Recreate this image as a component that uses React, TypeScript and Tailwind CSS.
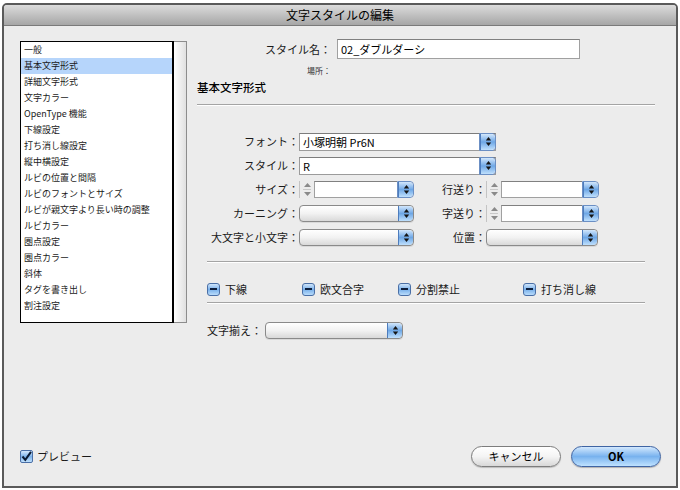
import React from 'react';

const items = [
  '一般',
  '基本文字形式',
  '詳細文字形式',
  '文字カラー',
  'OpenType 機能',
  '下線設定',
  '打ち消し線設定',
  '縦中横設定',
  'ルビの位置と間隔',
  'ルビのフォントとサイズ',
  'ルビが親文字より長い時の調整',
  'ルビカラー',
  '圏点設定',
  '圏点カラー',
  '斜体',
  'タグを書き出し',
  '割注設定',
];

const UpDown = () => (
  <svg width="7" height="11" viewBox="0 0 7 11">
    <path d="M3.5 1 L6.2 4.4 H0.8 Z M3.5 10 L6.2 6.6 H0.8 Z" fill="#151515" />
  </svg>
);

// blue aqua arrow button on the right end of popups
const BlueBtn = () => (
  <div className="w-[15px] h-full shrink-0 rounded-r-[4px] border-l border-[#4d7cbd] bg-linear-to-b from-[#d2e7fc] via-[#6ea7e5] to-[#bfe0fd] flex items-center justify-center">
    <UpDown />
  </div>
);

const Popup = ({ className }: { className: string }) => (
  <div
    className={`${className} h-[17px] flex rounded-[4px] border border-[#8a8a8a] bg-linear-to-b from-white via-[#f2f2f2] to-[#d9d9d9] overflow-hidden shadow-[0_1px_0_rgba(0,0,0,0.08)]`}
  >
    <div className="flex-1" />
    <BlueBtn />
  </div>
);

const Combo = ({ value }: { value: string }) => (
  <div className="w-[197px] h-[18px] flex bg-white border border-[#9b9b9b] border-t-[#7c7c7c]">
    <div className="flex-1 px-[3px] text-[11px] leading-[16px] text-black">{value}</div>
    <div className="-my-px -mr-px rounded-r-[4px] border border-[#6b8fc4] overflow-hidden flex">
      <BlueBtn />
    </div>
  </div>
);

const Stepper = ({ field }: { field: string }) => (
  <div className="flex h-[17px]">
    <div className="w-[15px] h-full flex flex-col items-center justify-center gap-[2px] border-l border-[#c4c4c4]">
      <svg width="7" height="4" viewBox="0 0 7 4">
        <path d="M3.5 0 L7 4 H0 Z" fill="#8a8a8a" />
      </svg>
      <div className="w-[8px] h-px bg-[#c8c8c8]" />
      <svg width="7" height="4" viewBox="0 0 7 4">
        <path d="M3.5 4 L7 0 H0 Z" fill="#8a8a8a" />
      </svg>
    </div>
    <div className={`${field} h-full bg-white border border-[#a0a0a0] border-t-[#808080] border-r-0`} />
    <div className="h-full rounded-r-[4px] border border-[#6b8fc4] overflow-hidden flex">
      <BlueBtn />
    </div>
  </div>
);

const Mixed = () => (
  <div className="w-[13px] h-[13px] rounded-[3px] border border-[#4a6fa6] bg-linear-to-b from-[#cfe5fb] via-[#79b0ea] to-[#b9dcfb] flex items-center justify-center">
    <div className="w-[7px] h-[2px] bg-[#0d1f3d]" />
  </div>
);

const Sep = ({ className }: { className: string }) => (
  <div className={`${className} h-[2px] border-t border-[#a4a4a4] border-b border-b-white`} />
);

export default function App() {
  return (
    <div className="w-[680px] h-[490px] bg-white pt-[3px] px-[2px] pb-[2px] font-['Noto_Sans_CJK_JP','Noto_Sans',sans-serif] text-[#1a1a1a]">
      <div className="w-full h-full flex flex-col border-2 border-[#5a5a5a] rounded-t-[5px] overflow-hidden bg-[#ececec]">
        {/* title bar */}
        <div className="h-[21px] shrink-0 bg-linear-to-b from-[#dcdcdc] to-[#a6a6a6] border-b border-[#7a7a7a] flex items-center justify-center text-[12px] text-black">
          文字スタイルの編集
        </div>

        <div className="flex-1 flex flex-col">
          <div className="flex pt-[13px] pl-[16px] pr-[21px]">
            {/* category list */}
            <div className="mt-[2px] w-[167px] h-[282px] flex shrink-0">
              <div className="flex-1 bg-white border border-black border-r-2">
                {items.map((it, i) => (
                  <div
                    key={it}
                    className={`h-[16px] pl-[3px] text-[9px] leading-[16px] whitespace-nowrap ${
                      i === 1 ? 'bg-[#b6d5fb]' : ''
                    }`}
                  >
                    {it}
                  </div>
                ))}
              </div>
              <div className="w-[13px] bg-linear-to-r from-white to-[#e0e0e0] border-y border-r border-[#8c8c8c]" />
            </div>

            {/* form */}
            <div className="ml-[10px] flex-1 flex flex-col">
              <div className="flex items-center h-[20px]">
                <div className="w-[136px] text-right text-[11px] pr-[2px]">スタイル名：</div>
                <div className="ml-[4px] w-[243px] h-[20px] bg-white border border-[#a0a0a0] border-t-[#808080] px-[3px] text-[11px] leading-[18px] text-black">
                  02_ダブルダーシ
                </div>
              </div>
              <div className="mt-[6px] w-[136px] text-right text-[8px] leading-[12px] text-[#333] pr-[2px]">場所：</div>
              <div className="mt-[2px] text-[11.5px] leading-[16px] font-medium text-black">基本文字形式</div>
              <Sep className="mt-[9px] w-full" />

              <div className="mt-[27px] flex flex-col gap-[7px] text-[11px]">
                <div className="flex items-center h-[17px]">
                  <div className="w-[102px] text-right">フォント：</div>
                  <Combo value="小塚明朝 Pr6N" />
                </div>
                <div className="flex items-center h-[17px]">
                  <div className="w-[102px] text-right">スタイル：</div>
                  <Combo value="R" />
                </div>
                <div className="flex items-center h-[17px]">
                  <div className="w-[102px] text-right">サイズ：</div>
                  <Stepper field="w-[83px]" />
                  <div className="w-[72px] text-right">行送り：</div>
                  <Stepper field="w-[81px]" />
                </div>
                <div className="flex items-center h-[17px]">
                  <div className="w-[102px] text-right">カーニング：</div>
                  <Popup className="w-[115px]" />
                  <div className="w-[72px] text-right">字送り：</div>
                  <Stepper field="w-[81px]" />
                </div>
                <div className="flex items-center h-[17px]">
                  <div className="w-[102px] text-right">大文字と小文字：</div>
                  <Popup className="w-[115px]" />
                  <div className="w-[72px] text-right">位置：</div>
                  <Popup className="w-[112px]" />
                </div>
              </div>

              <Sep className="mt-[15px] mx-[10px]" />

              <div className="mt-[19px] ml-[10px] flex items-center h-[14px] text-[11px]">
                <div className="w-[95px] flex items-center gap-[5px]">
                  <Mixed />
                  <span>下線</span>
                </div>
                <div className="w-[96px] flex items-center gap-[5px]">
                  <Mixed />
                  <span>欧文合字</span>
                </div>
                <div className="w-[125px] flex items-center gap-[5px]">
                  <Mixed />
                  <span>分割禁止</span>
                </div>
                <div className="flex items-center gap-[5px]">
                  <Mixed />
                  <span>打ち消し線</span>
                </div>
              </div>

              <Sep className="mt-[6px] mx-[10px]" />

              <div className="mt-[18px] ml-[10px] flex items-center h-[17px] text-[11px]">
                <div className="w-[58px]">文字揃え：</div>
                <Popup className="w-[138px]" />
              </div>
            </div>
          </div>

          {/* footer */}
          <div className="mt-auto flex items-center justify-between pl-[16px] pr-[15px] pb-[19px]">
            <div className="flex items-center gap-[4px] text-[11px]">
              <div className="w-[13px] h-[13px] rounded-[2px] border border-[#4a6fa6] bg-linear-to-b from-[#d4e8fc] via-[#7db3eb] to-[#c0e0fc] flex items-center justify-center">
                <svg width="11" height="11" viewBox="0 0 11 11">
                  <path d="M1.5 5.5 L4.3 8.8 L10 0.8" stroke="#0a1a33" strokeWidth="2" fill="none" />
                </svg>
              </div>
              <span>プレビュー</span>
            </div>
            <div className="flex gap-[10px]">
              <button className="w-[90px] h-[21px] rounded-full border border-[#7d7d7d] bg-linear-to-b from-white via-[#f4f4f4] to-[#d8d8d8] text-[11px] text-black shadow-[0_1px_1px_rgba(0,0,0,0.2)]">
                キャンセル
              </button>
              <button className="w-[90px] h-[21px] rounded-full border border-[#3f64a3] bg-linear-to-b from-[#d3e8fd] via-[#78b2ee] to-[#bfe2ff] text-[11px] font-bold text-black shadow-[0_1px_1px_rgba(0,0,0,0.25)]">
                OK
              </button>
            </div>
          </div>
        </div>
      </div>
    </div>
  );
}
